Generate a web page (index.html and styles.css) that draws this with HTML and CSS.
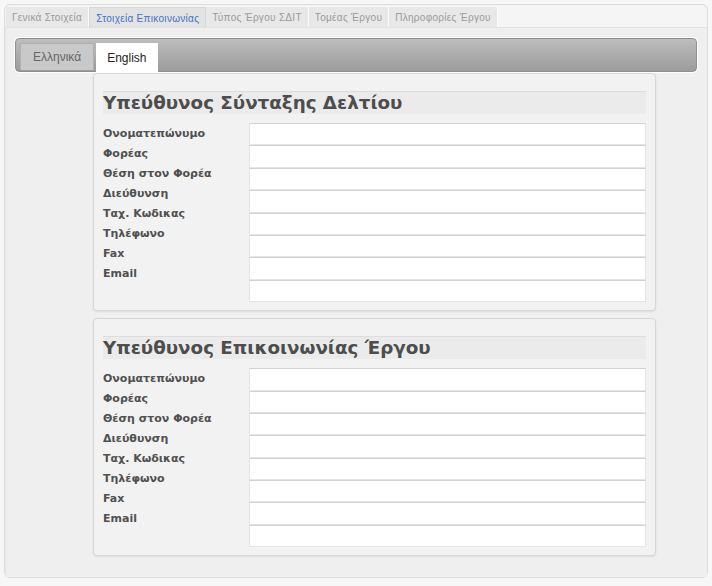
FILE: index.html
```html
<!DOCTYPE html>
<html lang="el">
<head>
<meta charset="utf-8">
<title>Στοιχεία Επικοινωνίας</title>
<link rel="stylesheet" href="styles.css">
</head>
<body>
<div class="page">
  <ul class="tabs">
    <li class="tab">Γενικά Στοιχεία</li>
    <li class="tab active">Στοιχεία Επικοινωνίας</li>
    <li class="tab">Τύπος Έργου ΣΔΙΤ</li>
    <li class="tab">Τομέας Έργου</li>
    <li class="tab">Πληροφορίες Έργου</li>
  </ul>
  <div class="content">
    <div class="langbar">
      <span class="lang">Ελληνικά</span>
      <span class="lang current">English</span>
    </div>

    <section class="box">
      <h2 class="box-title">Υπεύθυνος Σύνταξης Δελτίου</h2>
      <div class="form">
        <ul class="labels">
          <li>Ονοματεπώνυμο</li>
          <li>Φορέας</li>
          <li>Θέση στον Φορέα</li>
          <li>Διεύθυνση</li>
          <li>Ταχ. Κωδικας</li>
          <li>Τηλέφωνο</li>
          <li>Fax</li>
          <li>Email</li>
        </ul>
        <div class="fields">
          <input class="field" type="text">
          <input class="field" type="text">
          <input class="field" type="text">
          <input class="field" type="text">
          <input class="field" type="text">
          <input class="field" type="text">
          <input class="field" type="text">
          <input class="field" type="text">
        </div>
      </div>
    </section>

    <section class="box">
      <h2 class="box-title">Υπεύθυνος Επικοινωνίας Έργου</h2>
      <div class="form">
        <ul class="labels">
          <li>Ονοματεπώνυμο</li>
          <li>Φορέας</li>
          <li>Θέση στον Φορέα</li>
          <li>Διεύθυνση</li>
          <li>Ταχ. Κωδικας</li>
          <li>Τηλέφωνο</li>
          <li>Fax</li>
          <li>Email</li>
        </ul>
        <div class="fields">
          <input class="field" type="text">
          <input class="field" type="text">
          <input class="field" type="text">
          <input class="field" type="text">
          <input class="field" type="text">
          <input class="field" type="text">
          <input class="field" type="text">
          <input class="field" type="text">
        </div>
      </div>
    </section>
  </div>
</div>
</body>
</html>
```
FILE: styles.css
```css
html, body {
  margin: 0;
  padding: 0;
  background: #f7f7f7;
}

body {
  font-family: "Liberation Sans", Arial, sans-serif;
  padding: 4px 4px 0 4px;
}

.page {
  border: 1px solid #dcdcdc;
  border-radius: 6px;
  background: #f5f5f5;
  height: 574px;
  box-sizing: border-box;
  padding: 2px 0 0 0;
  display: flex;
  flex-direction: column;
}

.tabs {
  list-style: none;
  margin: 0 0 0 1px;
  padding: 0;
  display: flex;
  height: 20px;
}

.tab {
  font-size: 10px;
  letter-spacing: 0.3px;
  color: #9a9a9a;
  background: #e8e8e8;
  border-right: 1px solid #fafafa;
  padding: 1px 6px 0 6px;
  line-height: 20px;
  white-space: nowrap;
}

.tab.active {
  color: #3b73c9;
  background: #e3e3e3;
  border: 1px solid #d6d6d6;
  border-bottom: none;
  line-height: 19px;
}

.content {
  flex: 1;
  background: #efefef;
  border-top: 1px solid #e2e2e2;
  border-left: 1px solid #e6e6e6;
  padding: 10px 10px 0 9px;
}

.langbar {
  height: 34px;
  box-sizing: border-box;
  border: 1px solid #8f8f8f;
  outline: 1px solid #ffffff;
  border-radius: 4px;
  background: linear-gradient(#bdbdbd, #9c9c9c);
  display: flex;
  align-items: flex-end;
  padding: 0 0 0 4px;
  gap: 2px;
}

.lang {
  font-size: 12px;
  height: 27px;
  line-height: 27px;
  padding: 0 12px;
  color: #666;
  background: #c9c9c9;
  border: 1px solid #b0b0b0;
  border-bottom: none;
  box-sizing: border-box;
  margin-bottom: 1px;
}

.lang.current {
  background: #ffffff;
  color: #222;
  border-color: #ffffff;
  height: 29px;
  line-height: 29px;
  margin-bottom: -1px;
  padding: 0 10px;
}

.box {
  margin: 1px 0 0 78px;
  width: 563px;
  box-sizing: border-box;
  border: 1px solid #d6d6d6;
  border-radius: 4px;
  background: #f2f2f2;
  box-shadow: 0 1px 2px rgba(0, 0, 0, 0.08);
  padding: 17px 9px 8px 9px;
}

.box + .box {
  margin-top: 7px;
}

.box-title {
  margin: 0;
  height: 22px;
  border-top: 1px solid #dddddd;
  background: #ebebeb;
  font-family: "DejaVu Sans", Verdana, sans-serif;
  font-weight: bold;
  font-size: 18.3px;
  line-height: 22px;
  color: #4d4d4d;
}

.form {
  display: flex;
  margin-top: 9px;
}

.labels {
  list-style: none;
  margin: 1px 0 0 0;
  padding: 0;
  width: 146px;
  font-family: "DejaVu Sans", Verdana, sans-serif;
  font-weight: bold;
  font-size: 11px;
  line-height: 20px;
  color: #505050;
}

.fields {
  flex: 1;
  display: flex;
  flex-direction: column;
}

.field {
  display: block;
  margin: 0;
  height: 22.4px;
  box-sizing: border-box;
  border: 1px solid #e4e4e4;
  border-top-color: #d2d2d2;
  background: #ffffff;
  padding: 0 4px;
}
```
